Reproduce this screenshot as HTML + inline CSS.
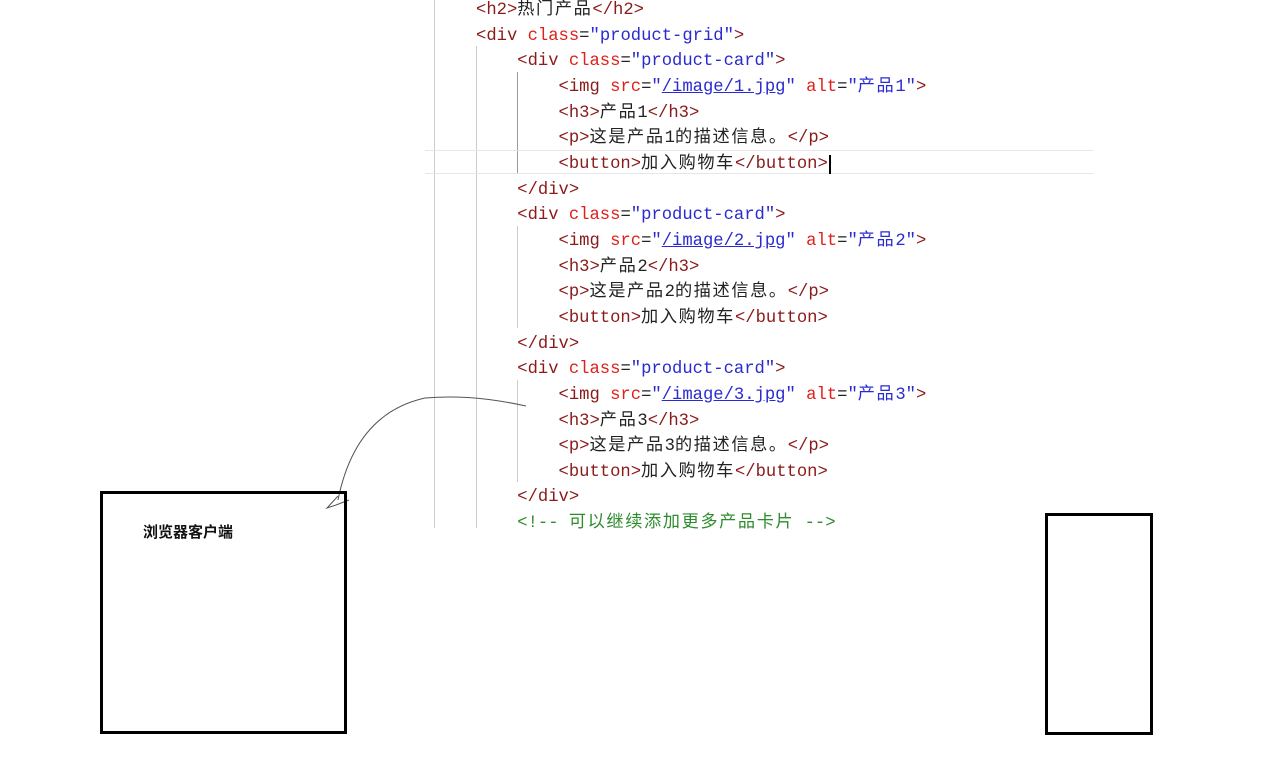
<!DOCTYPE html>
<html><head><meta charset="utf-8"><style>
body{margin:0;width:1276px;height:766px;background:#fff;position:relative;overflow:hidden;font-family:"Liberation Mono","Noto Sans CJK SC",monospace;}
.code{position:absolute;left:476px;top:-2px;font-size:17.2px;line-height:25.65px;white-space:pre;color:#222;}
.t{color:#8b1a1a}.a{color:#e0201a}.v{color:#2a2ad0}.c{color:#2e8b2e}
.u{text-decoration:underline;text-decoration-color:#2a2ad0}
.k{letter-spacing:1.6px}
.vl{position:absolute;width:1px;background:#ccc}
.hl{position:absolute;height:1px;background:#e6e6e6;left:425px;width:668px}
</style></head><body>
<div class="vl" style="left:434px;top:0;height:528px"></div>
<div class="vl" style="left:476px;top:46px;height:482px"></div>
<div class="vl" style="left:517px;top:72px;height:102px;background:#999"></div>
<div class="vl" style="left:517px;top:226px;height:102px"></div>
<div class="vl" style="left:517px;top:380px;height:102px"></div>
<div class="hl" style="top:150px"></div>
<div class="hl" style="top:173px"></div>
<div class="code"><span class="t">&lt;h2&gt;</span><span class="k">热门产品</span><span class="t">&lt;/h2&gt;</span>
<span class="t">&lt;div</span> <span class="a">class</span>=<span class="v">"product-grid"</span><span class="t">&gt;</span>
    <span class="t">&lt;div</span> <span class="a">class</span>=<span class="v">"product-card"</span><span class="t">&gt;</span>
        <span class="t">&lt;img</span> <span class="a">src</span>=<span class="v">"<span class="u">/image/1.jpg</span>"</span> <span class="a">alt</span>=<span class="v">"<span class="k">产品</span>1"</span><span class="t">&gt;</span>
        <span class="t">&lt;h3&gt;</span><span class="k">产品</span>1<span class="t">&lt;/h3&gt;</span>
        <span class="t">&lt;p&gt;</span><span class="k">这是产品</span>1<span class="k">的描述信息。</span><span class="t">&lt;/p&gt;</span>
        <span class="t">&lt;button&gt;</span><span class="k">加入购物车</span><span class="t">&lt;/button&gt;</span><span style="border-left:2px solid #000;margin-left:1px"></span>
    <span class="t">&lt;/div&gt;</span>
    <span class="t">&lt;div</span> <span class="a">class</span>=<span class="v">"product-card"</span><span class="t">&gt;</span>
        <span class="t">&lt;img</span> <span class="a">src</span>=<span class="v">"<span class="u">/image/2.jpg</span>"</span> <span class="a">alt</span>=<span class="v">"<span class="k">产品</span>2"</span><span class="t">&gt;</span>
        <span class="t">&lt;h3&gt;</span><span class="k">产品</span>2<span class="t">&lt;/h3&gt;</span>
        <span class="t">&lt;p&gt;</span><span class="k">这是产品</span>2<span class="k">的描述信息。</span><span class="t">&lt;/p&gt;</span>
        <span class="t">&lt;button&gt;</span><span class="k">加入购物车</span><span class="t">&lt;/button&gt;</span>
    <span class="t">&lt;/div&gt;</span>
    <span class="t">&lt;div</span> <span class="a">class</span>=<span class="v">"product-card"</span><span class="t">&gt;</span>
        <span class="t">&lt;img</span> <span class="a">src</span>=<span class="v">"<span class="u">/image/3.jpg</span>"</span> <span class="a">alt</span>=<span class="v">"<span class="k">产品</span>3"</span><span class="t">&gt;</span>
        <span class="t">&lt;h3&gt;</span><span class="k">产品</span>3<span class="t">&lt;/h3&gt;</span>
        <span class="t">&lt;p&gt;</span><span class="k">这是产品</span>3<span class="k">的描述信息。</span><span class="t">&lt;/p&gt;</span>
        <span class="t">&lt;button&gt;</span><span class="k">加入购物车</span><span class="t">&lt;/button&gt;</span>
    <span class="t">&lt;/div&gt;</span>
    <span class="c">&lt;!-- <span class="k">可以继续添加更多产品卡片</span> --&gt;</span></div>
<svg style="position:absolute;left:0;top:0" width="1276" height="766">
<path d="M526 406 C480 396 450 396 425 398 C380 408 350 440 338 500" fill="none" stroke="#555" stroke-width="1"/>
<path d="M338 496 L327 508 L336 505 L349 500" fill="none" stroke="#555" stroke-width="1"/>
<rect x="101.5" y="492.5" width="244" height="240" fill="none" stroke="#000" stroke-width="3"/>
<rect x="1046.5" y="514.5" width="105" height="219" fill="none" stroke="#000" stroke-width="3"/>
</svg>
<div style="position:absolute;left:143px;top:521px;font:bold 15px 'Liberation Sans','Noto Sans CJK SC',sans-serif;color:#111">浏览器客户端</div>
</body></html>
